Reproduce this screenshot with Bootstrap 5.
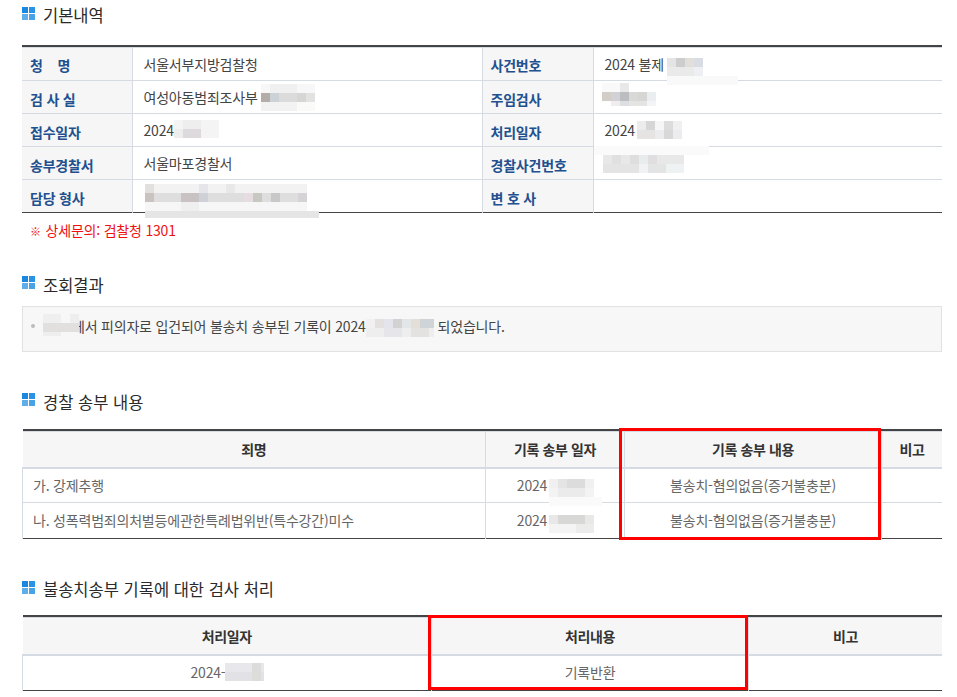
<!DOCTYPE html>
<html lang="ko">
<head>
<meta charset="utf-8">
<title>사건조회</title>
<link href="https://cdn.jsdelivr.net/npm/bootstrap@5.3.0/dist/css/bootstrap.min.css" rel="stylesheet">
<style>
html,body{background:#fff;overflow:hidden}
body{font-family:"Noto Sans CJK KR","Noto Sans",sans-serif;font-size:14px;color:#444;height:697px}
.page-wrap{position:relative;width:957px;height:697px;padding:3px 15px 0 22px}
.sec-title{display:flex;align-items:center;gap:8px;font-size:16.5px;font-weight:400;color:#2a2a2a;line-height:24px;margin:0}
.sec-title svg{flex:none;margin-top:-4px}
.t2{margin-top:32px}
.t3{margin-top:38px}
.t4{margin-top:38px}
.data-tbl{table-layout:fixed;width:920px;border-collapse:collapse;margin:0;border-top:2px solid #444;border-bottom:1px solid #444;letter-spacing:-.2px}
.data-tbl>*>tr>*{border:0;border-bottom:1px solid #d5dae3;border-right:1px solid #d5dae3;padding:0;font-size:14px;vertical-align:middle;box-shadow:none}
.data-tbl>tbody>tr:last-child>*{border-bottom:0}
.data-tbl>*>tr>*:last-child{border-right:0}
.data-tbl>*:first-of-type>tr:first-child>*{box-shadow:inset 0 1px 0 #d5dae3}
.info-tbl{margin-top:18px}
.info-tbl tr{height:33px}
.info-tbl tr:first-child{height:34px}
.info-tbl th{background:#f6f6f6;color:#22508f;font-weight:700;padding-left:8px!important;padding-top:5px!important}
.info-tbl td{color:#444;padding-left:11px!important;padding-top:3px!important;padding-bottom:1px!important}
.list-tbl{margin-top:15px}
.list-gap{margin-top:14px}
.list-tbl thead tr{height:38px}
.list-tbl tbody tr{height:35px}
.list-tbl tbody tr:last-child{height:36px}
.list-tbl thead th{background:#f6f6f6;color:#333;font-weight:700;text-align:center;letter-spacing:-.4px;padding-top:2px}
.list-tbl td{color:#666;text-align:center}
.list-tbl td:first-child{border-left:1px solid #d5dae3}
.list-tbl td.txt-left{text-align:left;padding-left:10px}
.notice-red{color:#f01010;font-size:14px;line-height:20px;margin:7px 0 0 8px;letter-spacing:-.2px}
.notice-mark{font-size:11px;margin-right:1px}
.result-box{margin-top:9px;height:46px;border:1px solid #e2e2e2;background:#f7f7f7;display:flex;align-items:center;padding:0 0 5px 8px;color:#444;width:920px;letter-spacing:-.2px}
.bullet-dot{width:4px;height:4px;border-radius:50%;background:#bbb;margin-right:9px;flex:none}
.gap-name{width:28px;flex:none}
.gap-result{width:72px;display:inline-block}
.gap-sent{width:46px;display:inline-block}
.gap-proc{width:38px;display:inline-block}
.overlay-layer{position:absolute;left:0;top:0;pointer-events:none}
</style>
</head>
<body>
<main class="page-wrap">
  <h2 class="sec-title">
    <svg width="13" height="13" viewBox="0 0 13 13"><rect width="6" height="6" fill="#1a87e0"/><rect x="7" width="6" height="6" fill="#2b93e5"/><rect y="7" width="6" height="6" fill="#5fade9"/><rect x="7" y="7" width="6" height="6" fill="#4aa2e6"/></svg>
    기본내역
  </h2>
  <table class="table data-tbl info-tbl">
    <colgroup><col style="width:110px"><col style="width:350px"><col style="width:111px"><col></colgroup>
    <tbody>
      <tr><th>청&nbsp;&nbsp;&nbsp; 명</th><td>서울서부지방검찰청</td><th>사건번호</th><td>2024 불제</td></tr>
      <tr><th>검 사 실</th><td>여성아동범죄조사부</td><th>주임검사</th><td></td></tr>
      <tr><th>접수일자</th><td>2024</td><th>처리일자</th><td>2024</td></tr>
      <tr><th>송부경찰서</th><td>서울마포경찰서</td><th>경찰사건번호</th><td></td></tr>
      <tr><th>담당 형사</th><td></td><th>변 호 사</th><td></td></tr>
    </tbody>
  </table>
  <p class="notice-red"><span class="notice-mark">※</span> 상세문의: 검찰청 1301</p>

  <h2 class="sec-title t2">
    <svg width="13" height="13" viewBox="0 0 13 13"><rect width="6" height="6" fill="#1a87e0"/><rect x="7" width="6" height="6" fill="#2b93e5"/><rect y="7" width="6" height="6" fill="#5fade9"/><rect x="7" y="7" width="6" height="6" fill="#4aa2e6"/></svg>
    조회결과
  </h2>
  <div class="result-box"><span class="bullet-dot"></span><span class="gap-name"></span><span>에서 피의자로 입건되어 불송치 송부된 기록이 2024<span class="gap-result"></span>되었습니다.</span></div>

  <h2 class="sec-title t3">
    <svg width="13" height="13" viewBox="0 0 13 13"><rect width="6" height="6" fill="#1a87e0"/><rect x="7" width="6" height="6" fill="#2b93e5"/><rect y="7" width="6" height="6" fill="#5fade9"/><rect x="7" y="7" width="6" height="6" fill="#4aa2e6"/></svg>
    경찰 송부 내용
  </h2>
  <table class="table data-tbl list-tbl">
    <colgroup><col style="width:463px"><col style="width:139px"><col style="width:257px"><col></colgroup>
    <thead><tr><th>죄명</th><th>기록 송부 일자</th><th>기록 송부 내용</th><th>비고</th></tr></thead>
    <tbody>
      <tr><td class="txt-left">가. 강제추행</td><td>2024<span class="gap-sent"></span></td><td>불송치-혐의없음(증거불충분)</td><td></td></tr>
      <tr><td class="txt-left">나. 성폭력범죄의처벌등에관한특례법위반(특수강간)미수</td><td>2024<span class="gap-sent"></span></td><td>불송치-혐의없음(증거불충분)</td><td></td></tr>
    </tbody>
  </table>

  <h2 class="sec-title t4">
    <svg width="13" height="13" viewBox="0 0 13 13"><rect width="6" height="6" fill="#1a87e0"/><rect x="7" width="6" height="6" fill="#2b93e5"/><rect y="7" width="6" height="6" fill="#5fade9"/><rect x="7" y="7" width="6" height="6" fill="#4aa2e6"/></svg>
    불송치송부 기록에 대한 검사 처리
  </h2>
  <table class="table data-tbl list-tbl list-gap">
    <colgroup><col style="width:409px"><col style="width:317px"><col></colgroup>
    <thead><tr><th>처리일자</th><th>처리내용</th><th>비고</th></tr></thead>
    <tbody>
      <tr><td>2024-<span class="gap-proc"></span></td><td>기록반환</td><td></td></tr>
    </tbody>
  </table>

  <!-- blur patches and red annotation boxes that lie over the content -->
  <svg class="overlay-layer" width="957" height="697" viewBox="0 0 957 697" shape-rendering="crispEdges">
    <!-- 검사실 -->
    <g transform="translate(261 84)">
      <rect x="0" y="0" width="54" height="9" fill="#f7f7f7"/><rect x="9" y="0" width="27" height="9" fill="#f0f0f0"/>
      <rect x="0" y="9" width="9" height="9" fill="#b3adaa"/><rect x="9" y="9" width="9" height="9" fill="#cbd2d8"/><rect x="18" y="9" width="18" height="9" fill="#dbdbdb"/><rect x="36" y="9" width="9" height="9" fill="#d8d6d5"/><rect x="45" y="9" width="9" height="9" fill="#e2e2e0"/>
      <rect x="0" y="18" width="36" height="9" fill="#f2f2f2"/><rect x="36" y="18" width="18" height="9" fill="#fafaf8"/>
    </g>
    <!-- 접수일자 -->
    <g transform="translate(174 120)">
      <rect x="0" y="0" width="45" height="9" fill="#f4f4f4"/><rect x="9" y="0" width="18" height="9" fill="#eeeeee"/>
      <rect x="0" y="9" width="45" height="9" fill="#f4f4f4"/><rect x="0" y="9" width="9" height="9" fill="#eeeeee"/><rect x="9" y="9" width="18" height="9" fill="#ddd9dd"/>
    </g>
    <!-- 담당 형사 -->
    <g transform="translate(145 184)">
      <rect x="0" y="0" width="162" height="9" fill="#f2f2f2"/><rect x="0" y="0" width="9" height="9" fill="#e2e0de"/>
      <rect x="54" y="0" width="9" height="9" fill="#e6e6ea"/><rect x="81" y="0" width="9" height="9" fill="#e8e8e8"/>
      <rect x="0" y="9" width="162" height="9" fill="#dedede"/>
      <rect x="0" y="9" width="9" height="9" fill="#cbc3bf"/><rect x="36" y="9" width="18" height="9" fill="#c9c2c2"/><rect x="54" y="9" width="9" height="9" fill="#cfd0d8"/><rect x="99" y="9" width="9" height="9" fill="#e5dde2"/><rect x="108" y="9" width="9" height="9" fill="#c8c8c2"/><rect x="126" y="9" width="9" height="9" fill="#c9c8c8"/><rect x="153" y="9" width="9" height="9" fill="#d6d2d8"/>
      <rect x="0" y="18" width="162" height="9" fill="#f6f6f6"/><rect x="36" y="18" width="18" height="9" fill="#efefef"/>
      <rect x="0" y="27" width="174" height="7" fill="#e5e5e5"/>
    </g>
    <!-- 사건번호 -->
    <g transform="translate(667 58)">
      <rect x="0" y="0" width="9" height="9" fill="#e4e4e4"/><rect x="9" y="0" width="9" height="9" fill="#cdcdcd"/><rect x="18" y="0" width="9" height="9" fill="#e2deda"/><rect x="27" y="0" width="9" height="9" fill="#d9dce2"/>
      <rect x="0" y="9" width="27" height="9" fill="#eaeaea"/><rect x="27" y="9" width="9" height="9" fill="#eeeff2"/>
      <rect x="0" y="18" width="71" height="9" fill="#f9f9f9"/>
    </g>
    <!-- 주임검사 -->
    <g transform="translate(602 83)">
      <rect x="0" y="0" width="27" height="9" fill="#f9f9f9"/><rect x="18" y="0" width="9" height="9" fill="#e8e8e8"/>
      <rect x="0" y="9" width="9" height="9" fill="#d3cdc7"/><rect x="9" y="9" width="9" height="9" fill="#d2d2d6"/><rect x="18" y="9" width="9" height="9" fill="#bcbdc0"/><rect x="27" y="9" width="9" height="9" fill="#d9d9d8"/><rect x="36" y="9" width="9" height="9" fill="#d6d6d4"/><rect x="45" y="9" width="9" height="9" fill="#eaeef0"/>
      <rect x="9" y="18" width="9" height="5" fill="#f0eded"/><rect x="18" y="18" width="9" height="5" fill="#dcdfe2"/><rect x="27" y="18" width="18" height="5" fill="#e4e4e2"/><rect x="45" y="18" width="9" height="5" fill="#f3f4f6"/>
    </g>
    <!-- 처리일자 -->
    <g transform="translate(637 121)">
      <rect x="0" y="0" width="9" height="9" fill="#ececec"/><rect x="9" y="0" width="9" height="9" fill="#d6d6d6"/><rect x="18" y="0" width="9" height="9" fill="#f6f6f6"/><rect x="27" y="0" width="9" height="9" fill="#dcdcdc"/><rect x="36" y="0" width="9" height="9" fill="#f0f0f0"/>
      <rect x="0" y="9" width="18" height="9" fill="#e6e4e2"/><rect x="18" y="9" width="9" height="9" fill="#ececee"/><rect x="27" y="9" width="9" height="9" fill="#d8d8d8"/><rect x="36" y="9" width="9" height="9" fill="#ececee"/>
    </g>
    <rect x="594" y="146" width="115" height="9" fill="#fafafa"/>
    <!-- 경찰사건번호 -->
    <g transform="translate(603 155)">
      <rect x="0" y="0" width="81" height="9" fill="#e8e8e8"/><rect x="9" y="0" width="9" height="9" fill="#e0e0e0"/><rect x="27" y="0" width="9" height="9" fill="#dedede"/><rect x="36" y="0" width="18" height="9" fill="#e8eced"/><rect x="45" y="0" width="9" height="9" fill="#e0dede"/>
      <rect x="0" y="9" width="81" height="9" fill="#e4e4e4"/><rect x="36" y="9" width="9" height="9" fill="#f0f2f3"/><rect x="63" y="9" width="18" height="9" fill="#eff2f3"/>
    </g>
    <!-- 조회결과 -->
    <g transform="translate(43 314)">
      <rect x="0" y="0" width="18" height="9" fill="#efefef"/><rect x="27" y="0" width="9" height="9" fill="#eeeeee"/>
      <rect x="0" y="9" width="36" height="9" fill="#e2e0de"/>
      <rect x="0" y="18" width="18" height="4" fill="#eeeeee"/>
    </g>
    <g transform="translate(366 319)">
      <rect x="0" y="0" width="68" height="9" fill="#f1f1f1"/><rect x="9" y="0" width="9" height="9" fill="#e4e0e0"/><rect x="18" y="0" width="9" height="9" fill="#e4e4ec"/><rect x="27" y="0" width="9" height="9" fill="#d2d2d2"/><rect x="36" y="0" width="9" height="9" fill="#e2e6e8"/><rect x="45" y="0" width="9" height="9" fill="#e4ded8"/><rect x="54" y="0" width="14" height="9" fill="#cfd4d8"/>
      <rect x="0" y="9" width="68" height="9" fill="#eeeeee"/><rect x="18" y="9" width="18" height="9" fill="#e6e6ea"/><rect x="45" y="9" width="18" height="9" fill="#e4e2e0"/>
    </g>
    <!-- 기록 송부 일자 -->
    <g transform="translate(549 479)">
      <rect x="0" y="0" width="45" height="9" fill="#f0f0f0"/><rect x="9" y="0" width="9" height="9" fill="#e4e4e4"/><rect x="18" y="0" width="18" height="9" fill="#dcdcdc"/>
      <rect x="0" y="9" width="45" height="9" fill="#f3f3f3"/><rect x="9" y="9" width="27" height="9" fill="#ebebeb"/>
      <rect x="0" y="18" width="53" height="9" fill="#fafafa"/>
    </g>
    <g transform="translate(549 515)">
      <rect x="0" y="0" width="45" height="9" fill="#e8e8e8"/><rect x="9" y="0" width="27" height="9" fill="#d8d8d6"/>
      <rect x="0" y="9" width="45" height="9" fill="#f4f4f4"/><rect x="27" y="9" width="18" height="9" fill="#ececec"/>
    </g>
    <!-- 처리일자 2 -->
    <g transform="translate(225 663)">
      <rect x="0" y="0" width="39" height="9" fill="#e8e8ec"/><rect x="27" y="0" width="9" height="9" fill="#dcdcdc"/>
      <rect x="0" y="9" width="39" height="9" fill="#e2e2e6"/><rect x="27" y="9" width="9" height="9" fill="#dcdcda"/>
    </g>
    <!-- 빨간 표시 -->
    <rect x="620.5" y="429.5" width="259" height="109" fill="none" stroke="#f00" stroke-width="3"/>
    <rect x="429.5" y="616.5" width="317" height="72" fill="none" stroke="#f00" stroke-width="3"/>
  </svg>
</main>
</body>
</html>
